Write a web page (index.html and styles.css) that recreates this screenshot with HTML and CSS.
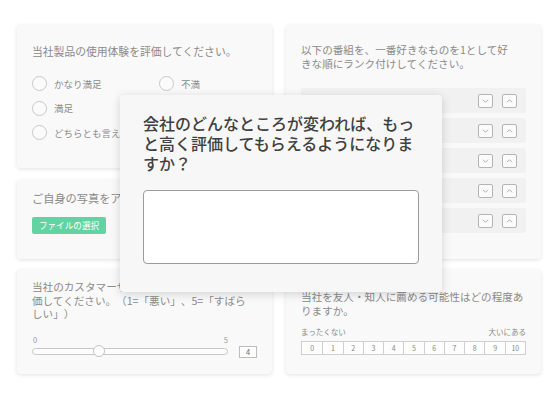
FILE: index.html
```html
<!DOCTYPE html>
<html lang="ja">
<head>
<meta charset="utf-8">
<link rel="stylesheet" href="styles.css">
</head>
<body>
<div class="page">
  <div class="col">
    <div class="card c-l1">
      <p class="q">当社製品の使用体験を評価してください。</p>
      <div class="radios">
        <div class="radio"><span class="dot"></span>かなり満足</div>
        <div class="radio"><span class="dot"></span>不満</div>
        <div class="radio"><span class="dot"></span>満足</div>
        <div class="radio"><span class="dot"></span>非常に不満</div>
        <div class="radio"><span class="dot"></span>どちらとも言えない</div>
      </div>
    </div>
    <div class="card c-l2">
      <p class="q">ご自身の写真をアップロードしてください。</p>
      <div class="filebtn">ファイルの選択</div>
    </div>
    <div class="card c-l3">
      <p class="q">当社のカスタマーサービスのご対応について評<br>価してください。（1=「悪い」、5=「すばら<br>しい」）</p>
      <div class="slider-labels"><span>0</span><span>5</span></div>
      <div class="slider-row">
        <div class="track"><span class="thumb"></span></div>
        <div class="val">4</div>
      </div>
    </div>
  </div>
  <div class="col">
    <div class="card c-r1">
      <p class="q">以下の番組を、一番好きなものを1として好<br>きな順にランク付けしてください。</p>
      <div class="ranks">
        <div class="rank"><span class="rb"><svg viewBox="0 0 15 14"><path d="M4.5 5.5 L7.5 8.5 L10.5 5.5"/></svg></span><span class="rb"><svg viewBox="0 0 15 14"><path d="M4.5 8.5 L7.5 5.5 L10.5 8.5"/></svg></span></div>
        <div class="rank"><span class="rb"><svg viewBox="0 0 15 14"><path d="M4.5 5.5 L7.5 8.5 L10.5 5.5"/></svg></span><span class="rb"><svg viewBox="0 0 15 14"><path d="M4.5 8.5 L7.5 5.5 L10.5 8.5"/></svg></span></div>
        <div class="rank"><span class="rb"><svg viewBox="0 0 15 14"><path d="M4.5 5.5 L7.5 8.5 L10.5 5.5"/></svg></span><span class="rb"><svg viewBox="0 0 15 14"><path d="M4.5 8.5 L7.5 5.5 L10.5 8.5"/></svg></span></div>
        <div class="rank"><span class="rb"><svg viewBox="0 0 15 14"><path d="M4.5 5.5 L7.5 8.5 L10.5 5.5"/></svg></span><span class="rb"><svg viewBox="0 0 15 14"><path d="M4.5 8.5 L7.5 5.5 L10.5 8.5"/></svg></span></div>
        <div class="rank"><span class="rb"><svg viewBox="0 0 15 14"><path d="M4.5 5.5 L7.5 8.5 L10.5 5.5"/></svg></span><span class="rb"><svg viewBox="0 0 15 14"><path d="M4.5 8.5 L7.5 5.5 L10.5 8.5"/></svg></span></div>
      </div>
    </div>
    <div class="card c-r2">
      <p class="q">当社を友人・知人に薦める可能性はどの程度あ<br>りますか。</p>
      <div class="nps-labels"><span>まったくない</span><span>大いにある</span></div>
      <div class="nps">
        <span>0</span><span>1</span><span>2</span><span>3</span><span>4</span><span>5</span><span>6</span><span>7</span><span>8</span><span>9</span><span>10</span>
      </div>
    </div>
  </div>
</div>
<div class="modal">
  <h1 class="mtitle">会社のどんなところが変われば、もっと高く評価してもらえるようになりますか？</h1>
  <div class="textarea"></div>
</div>
</body>
</html>
```
FILE: styles.css
```css
* { box-sizing: border-box; }
html, body { margin: 0; padding: 0; background: #ffffff; }
body {
  width: 557px; height: 400px; overflow: hidden; position: relative;
  font-family: "Noto Sans CJK JP", "Noto Sans", sans-serif;
  text-spacing-trim: space-all;
  font-feature-settings: "palt" 0;
}
.page {
  display: flex; gap: 14px;
  padding: 25px 0 0 17px;
}
.col { display: flex; flex-direction: column; gap: 11px; width: 255px; }
.card {
  background: #f9f9f9;
  border-radius: 4px;
  box-shadow: 0 1px 4px rgba(0,0,0,0.12);
  padding: 0 15px;
  color: #8d8d8d;
}
.q {
  margin: 0;
  font-size: 10.6px;
  line-height: 13.5px;
  color: #8a8a8a;
  white-space: nowrap;
}
.c-l1 { height: 143px; padding-top: 19px; }
.c-l1 .q { font-size: 10.8px; line-height: 14px; }
.radios {
  display: grid; grid-template-columns: 127px 1fr;
  row-gap: 9.5px; margin-top: 18px;
}
.radio {
  display: flex; align-items: center; gap: 7px;
  font-size: 9.5px; line-height: 14px; color: #8a8a8a;
}
.dot {
  width: 15px; height: 15px; border-radius: 50%;
  border: 1px solid #c9c9c9; background: #fbfbfb; flex: none;
}
.c-l2 { height: 79px; padding-top: 11px; margin-top: 1px; }
.c-l2 .q { font-size: 11.2px; line-height: 15px; }
.filebtn {
  margin-top: 11px; width: 74px; height: 17px;
  background: #63d3a3; border-radius: 2px;
  color: #fff; font-size: 8.6px; line-height: 17px; text-align: center;
}
.c-l3 { height: 104px; padding-top: 10px; }
.c-l3 .q { line-height: 13.5px; }
.slider-labels {
  display: flex; justify-content: space-between;
  width: 197px; margin-top: 14px; margin-left: 0;
  font-size: 7.5px; line-height: 9px; color: #9a9a9a;
  padding: 0 1px 0 1px;
}
.slider-row { display: flex; align-items: center; margin-top: 2px; gap: 11px; }
.track {
  position: relative; width: 197px; height: 7px;
  border: 1px solid #c8c8c8; border-radius: 4px; background: #fdfdfd;
}
.thumb {
  position: absolute; left: 60px; top: -4px;
  width: 12px; height: 12px; border-radius: 50%;
  background: #fff; border: 1px solid #c4c4c4;
}
.val {
  width: 18px; height: 12px; border: 1px solid #bdbdbd; background: #fff;
  font-size: 7.5px; line-height: 10px; text-align: center; color: #666;
}
.c-r1 { height: 234px; padding-top: 18px; }
.ranks { display: flex; flex-direction: column; gap: 5px; margin-top: 18px; }
.rank {
  height: 25px; background: #f1f1f1; border-radius: 2px;
  display: flex; justify-content: flex-end; align-items: center;
  gap: 9px; padding-right: 9px;
}
.rb {
  width: 15px; height: 14px; border: 1px solid #b4b4b4; border-radius: 2px;
  background: #fbfbfb; display: flex;
}
.rb svg { width: 13px; height: 12px; }
.rb path { fill: none; stroke: #a0a0a0; stroke-width: 1; }
.c-r2 { height: 104px; padding-top: 20px; }
.nps-labels {
  display: flex; justify-content: space-between;
  margin-top: 10px; font-size: 7.5px; line-height: 10px; color: #888;
}
.nps {
  display: grid; grid-template-columns: repeat(11, 1fr);
  margin-top: 4px; height: 14px; width: 225px;
  border: 1px solid #cfcfcf; background: #fdfdfd;
}
.nps span {
  border-left: 1px solid #cfcfcf;
  font-size: 7px; line-height: 12px; text-align: center; color: #888;
}
.nps span:first-child { border-left: none; }
.modal {
  position: absolute; left: 120px; top: 95px;
  width: 322px; height: 197px;
  background: #f7f7f7; border-radius: 4px;
  box-shadow: 0 2px 10px rgba(0,0,0,0.16);
  padding: 18px 23px 0 23px;
}
.mtitle {
  margin: 0; font-size: 16px; line-height: 20px; font-weight: 500;
  color: #404040; width: 276px;
}
.textarea {
  margin-top: 17px; width: 276px; height: 74px;
  background: #fff; border: 1px solid #9c9c9c; border-radius: 4px;
}
```
